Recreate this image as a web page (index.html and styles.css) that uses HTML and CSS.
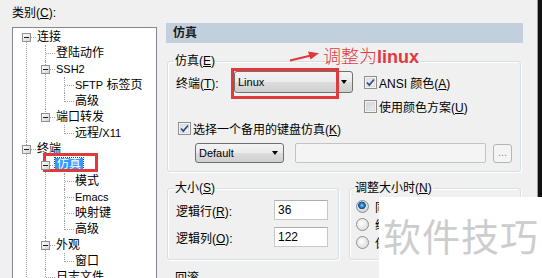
FILE: index.html
```html
<!DOCTYPE html>
<html lang="zh-CN">

<head>
    <meta charset="UTF-8">
    <title>会话选项 - 仿真</title>
    <link rel="stylesheet" href="styles.css">
</head>

<body>
    <div class="dialog">
        <!-- Category tree -->
        <div class="category">
            <div class="cat-label">类别(<u>C</u>):</div>
            <div class="tree-box">
                <ul class="tree">
                    <li><div class="node"><span class="box"></span>连接</div>
                        <ul>
                            <li><div class="node">登陆动作</div></li>
                            <li><div class="node"><span class="box"></span><span class="en">SSH2</span></div>
                                <ul>
                                    <li><div class="node"><span class="en">SFTP</span> 标签页</div></li>
                                    <li><div class="node">高级</div></li>
                                </ul>
                            </li>
                            <li><div class="node"><span class="box"></span>端口转发</div>
                                <ul>
                                    <li><div class="node">远程/<span class="en">X11</span></div></li>
                                </ul>
                            </li>
                        </ul>
                    </li>
                    <li><div class="node"><span class="box"></span>终端</div>
                        <ul>
                            <li><div class="node"><span class="box"></span><span class="sel">仿真</span></div>
                                <ul>
                                    <li><div class="node">模式</div></li>
                                    <li><div class="node"><span class="en">Emacs</span></div></li>
                                    <li><div class="node">映射键</div></li>
                                    <li><div class="node">高级</div></li>
                                </ul>
                            </li>
                            <li><div class="node"><span class="box"></span>外观</div>
                                <ul>
                                    <li><div class="node">窗口</div></li>
                                </ul>
                            </li>
                            <li><div class="node">日志文件</div></li>
                            <li><div class="node">打印</div></li>
                            <li><div class="node">X/Y/Zmodem</div></li>
                        </ul>
                    </li>
                    <li><div class="node"><span class="box"></span>文件传输</div></li>
                </ul>
            </div>
        </div>

        <!-- Emulation page -->
        <div class="panel">
            <div class="panel-title">仿真</div>

            <fieldset class="group emul">
                <legend>仿真(<u>E</u>)</legend>
                <div class="row row-term">
                    <span class="lbl term-lbl">终端(<u>T</u>):</span>
                    <div class="combo term-combo">Linux</div>
                    <span class="chk on ansi-chk"><svg width="9" height="9" viewBox="0 0 9 9"><path d="M1 4.5l2.3 2.6L8 1.5" fill="none" stroke="#2f4f86" stroke-width="1.7"/></svg></span>
                    <span>ANSI 颜色(<u>A</u>)</span>
                </div>
                <div class="row row-scheme">
                    <span class="chk"></span>
                    <span>使用颜色方案(<u>U</u>)</span>
                </div>
                <div class="row row-kbd">
                    <span class="chk on"><svg width="9" height="9" viewBox="0 0 9 9"><path d="M1 4.5l2.3 2.6L8 1.5" fill="none" stroke="#2f4f86" stroke-width="1.7"/></svg></span>
                    <span>选择一个备用的键盘仿真(<u>K</u>)</span>
                </div>
                <div class="row row-map">
                    <div class="combo kbd-combo">Default</div>
                    <div class="field field-off"></div>
                    <div class="btn-more">...</div>
                </div>
            </fieldset>

            <div class="group-row">
                <fieldset class="group size">
                    <legend>大小(<u>S</u>)</legend>
                    <div class="row row-size">
                        <span class="lbl size-lbl">逻辑行(<u>R</u>):</span>
                        <div class="field num">36</div>
                    </div>
                    <div class="row row-size">
                        <span class="lbl size-lbl">逻辑列(<u>O</u>):</span>
                        <div class="field num">122</div>
                    </div>
                </fieldset>

                <fieldset class="group resize">
                    <legend>调整大小时(<u>N</u>)</legend>
                    <div class="radio-row"><span class="radio on"></span>同步视图大小</div>
                    <div class="radio-row"><span class="radio"></span>缩放字体</div>
                    <div class="radio-row"><span class="radio"></span>保持大小</div>
                </fieldset>
            </div>

            <fieldset class="group scroll">
                <legend>回滚</legend>
            </fieldset>
        </div>

        <div class="edge"></div>
    </div>

    <!-- Annotations drawn over the screenshot -->
    <div class="mark mark-tree"></div>
    <div class="mark mark-term"></div>
    <div class="note">
        <svg width="32" height="14" viewBox="0 0 32 14">
            <path d="M1 11.5L22 6.5" stroke="#e2383e" stroke-width="2"/>
            <polygon points="19,2.5 30,4.2 21.5,10.5" fill="#e2383e"/>
        </svg>
        <span class="note-text">调整为<b>linux</b></span>
    </div>
    <div class="watermark">软件技巧</div>
</body>

</html>
```

FILE: styles.css
```css
/* General */
* {
    box-sizing: border-box;
}

body {
    margin: 0;
    width: 542px;
    height: 278px;
    overflow: hidden;
    position: relative;
    background-color: #f0f0f0;
    font-family: "Liberation Sans", "Noto Sans CJK SC", sans-serif;
    font-size: 12px;
    color: #000;
}

u {
    text-decoration-thickness: 1px;
    text-underline-offset: 1px;
}

.dialog {
    display: flex;
    height: 278px;
}

.en {
    font-size: 11px;
}

/* Category tree */
.category {
    flex: none;
    width: 157px;
    padding: 5px 0 0 12px;
}

.cat-label {
    height: 16px;
    line-height: 16px;
}

.tree-box {
    margin-top: 6px;
    height: 400px;
    background-color: #fff;
    border: 1px solid #828790;
    padding-top: 1px;
}

.tree,
.tree ul {
    list-style: none;
    margin: 0;
    padding: 0;
}

.tree {
    padding-left: 13px;
}

.tree ul {
    padding-left: 19px;
}

.tree li {
    position: relative;
}

.tree li::before {
    content: "";
    position: absolute;
    left: 0;
    top: 0;
    bottom: 0;
    border-left: 1px dotted #a0a0a0;
}

.tree li:last-child::before {
    bottom: auto;
    height: 9px;
}

.tree > li:first-child::before {
    top: 8px;
}

.node {
    position: relative;
    height: 16px;
    line-height: 16px;
    padding-left: 11px;
    white-space: nowrap;
}

.node::before {
    content: "";
    position: absolute;
    left: 1px;
    top: 8px;
    width: 9px;
    border-top: 1px dotted #a0a0a0;
}

.box {
    position: absolute;
    left: -4px;
    top: 4px;
    width: 9px;
    height: 9px;
    border: 1px solid #919191;
    background: linear-gradient(135deg, #fff, #d4d4d4);
    z-index: 1;
}

.box::after {
    content: "";
    position: absolute;
    left: 1px;
    top: 3px;
    width: 5px;
    height: 1px;
    background-color: #1a1a1a;
}

.sel {
    display: inline-block;
    height: 13px;
    line-height: 13px;
    margin: 1px 0 0 -1px;
    padding: 0 2px;
    vertical-align: top;
    background-color: #3399ff;
    color: #fff;
    outline: 1px dotted #1b4f8a;
}

/* Right panel */
.panel {
    flex: none;
    width: 357px;
    margin-left: 9px;
    padding-top: 23px;
}

.panel-title {
    height: 20px;
    line-height: 20px;
    padding-left: 7px;
    background-color: #c2d0dd;
    font-weight: bold;
    color: #1c1c1c;
}

.group {
    margin: 0 2px 0 1px;
    padding: 0 8px 8px;
    border: 1px solid #d5dfe5;
    border-radius: 3px;
    box-shadow: inset 1px 1px 0 #fff, 1px 1px 0 #fff;
    min-width: 0;
}

.group legend {
    margin-left: -2px;
    padding: 0 1px;
    height: 14px;
    line-height: 14px;
}

.emul {
    margin-top: 11px;
}

.row {
    display: flex;
    align-items: center;
    white-space: nowrap;
}

.row-term {
    margin-top: 2px;
    height: 24px;
}

.term-lbl {
    width: 58px;
}

.row-scheme {
    height: 24px;
    padding-left: 188px;
}

.row-kbd {
    height: 20px;
    padding-left: 2px;
}

.row-map {
    margin-top: 5px;
    height: 20px;
    padding-left: 19px;
}

/* Controls */
.combo {
    position: relative;
    height: 22px;
    line-height: 20px;
    padding-left: 3px;
    border: 1px solid #707070;
    border-radius: 3px;
    background: linear-gradient(#f3f3f3 0, #ebebeb 50%, #dddddd 51%, #cfcfcf 100%);
    font-size: 11px;
}

.combo::after {
    content: "";
    position: absolute;
    right: 5px;
    top: 8px;
    border-style: solid;
    border-color: #000 transparent transparent;
    border-width: 4px 3.5px 0;
}

.term-combo {
    width: 119px;
    margin-right: 11px;
}

.kbd-combo {
    width: 89px;
    height: 20px;
    line-height: 18px;
}

.kbd-combo::after {
    top: 7px;
}

.chk {
    flex: none;
    display: flex;
    align-items: center;
    justify-content: center;
    width: 13px;
    height: 13px;
    margin-right: 2px;
    border: 1px solid #8f8f8f;
    background: linear-gradient(135deg, #c9ccd1, #f4f4f4);
    box-shadow: inset 0 0 0 1px #f4f4f4, inset 0 0 0 2px #d9dbde;
}

.chk.on {
    background: linear-gradient(135deg, #d6dde6, #f7f9fb);
}

.field {
    height: 20px;
    line-height: 18px;
    padding-left: 3px;
    border: 1px solid #c6c9ce;
    border-top-color: #abadb3;
    background-color: #fff;
}

.field-off {
    width: 191px;
    margin-left: 11px;
    border: 1px solid #c3c3c3;
    border-radius: 2px;
    background-color: #f4f4f4;
}

.btn-more {
    width: 19px;
    height: 19px;
    margin-left: 7px;
    border: 1px solid #b5b5b5;
    border-radius: 3px;
    background-color: #f4f4f4;
    color: #8a8a8a;
    font-size: 11px;
    line-height: 15px;
    text-align: center;
}

/* Size / resize groups */
.group-row {
    display: flex;
    margin-top: 9px;
}

.size {
    width: 172px;
    flex: none;
}

.row-size {
    height: 22px;
    margin-top: 4px;
}

.row-size + .row-size {
    margin-top: 5px;
}

.size-lbl {
    width: 98px;
}

.num {
    width: 54px;
}

.resize {
    flex: 1;
    margin-left: 8px;
    padding-left: 6px;
}

.radio-row {
    display: flex;
    align-items: center;
    height: 18px;
    white-space: nowrap;
}

.radio-row:first-of-type {
    margin-top: 2px;
}

.radio {
    flex: none;
    width: 13px;
    height: 13px;
    margin-right: 6px;
    border: 1px solid #8f8f8f;
    border-radius: 50%;
    background: radial-gradient(circle at 40% 40%, #fff, #d3d3d3);
}

.radio.on {
    background: radial-gradient(circle at 45% 40%, #9cd6ff 0, #2c7cc4 2px, #124e8c 3.5px, #e9e9e9 4.2px, #d0d0d0 6px);
}

.scroll {
    margin-top: 11px;
    height: 40px;
}

/* Window edge on the right */
.edge {
    flex: none;
    width: 5px;
    margin-left: auto;
    border-left: 1px solid #7aa6cc;
    background-color: #111;
}

/* Red markers and note */
.mark {
    position: absolute;
    border: 3px solid #e0393e;
}

.mark-tree {
    left: 43px;
    top: 153px;
    width: 55px;
    height: 19px;
}

.mark-term {
    left: 231px;
    top: 68px;
    width: 108px;
    height: 31px;
}

.note {
    position: absolute;
    left: 289px;
    top: 45px;
    display: flex;
    align-items: center;
    color: #e2383e;
}

.note-text {
    margin-left: 2px;
    font-size: 18px;
    line-height: 20px;
    font-family: "Noto Sans CJK SC", sans-serif;
    font-weight: 300;
}

.note-text b {
    font-family: "Liberation Sans", sans-serif;
    font-weight: bold;
}

/* Watermark */
.watermark {
    position: absolute;
    left: 379px;
    top: 197px;
    right: 0;
    bottom: 0;
    padding: 19px 0 0 4px;
    background-color: #fff;
    color: #cdcdcd;
    font-family: "Noto Sans CJK SC", sans-serif;
    font-size: 38px;
    line-height: 38px;
    letter-spacing: 1px;
    white-space: nowrap;
}
```
